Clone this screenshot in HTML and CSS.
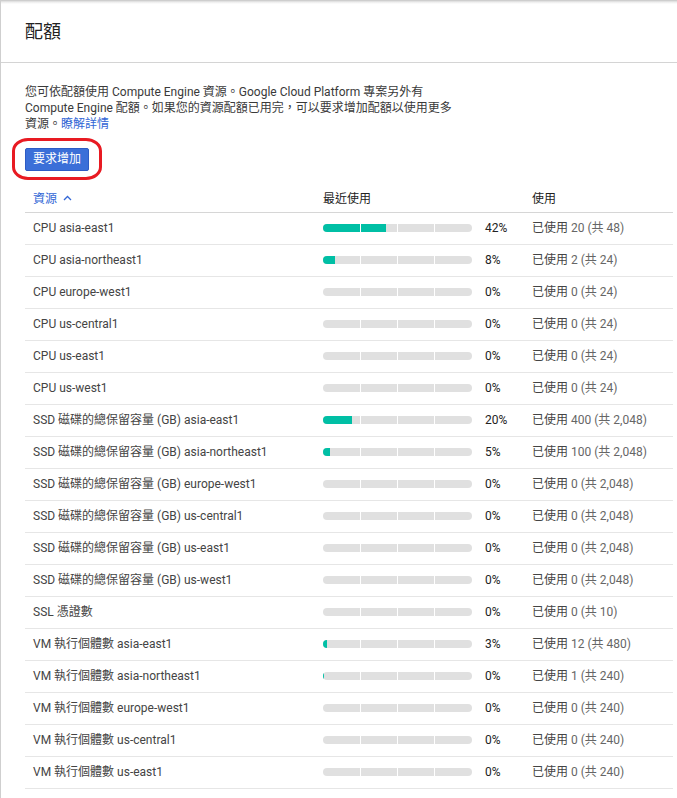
FILE: index.html
```html
<!DOCTYPE html>
<html lang="zh-Hant">
<head>
<meta charset="utf-8">
<title>配額</title>
<link rel="stylesheet" href="styles.css">
</head>
<body>
<div class="page">
  <header class="hdr"><h1 class="title">配額</h1></header>
  <main class="content">
    <p class="intro">您可依配額使用 Compute Engine 資源。Google Cloud Platform 專案另外有<br>Compute Engine 配額。如果您的資源配額已用完，可以要求增加配額以使用更多<br>資源。<a class="link" href="#">瞭解詳情</a></p>
    <div class="btn-wrap"><button class="btn">要求增加</button><span class="annot"></span></div>
    <table class="quota">
      <colgroup><col class="c1"><col class="c2"><col class="c3"><col class="c4"></colgroup>
      <thead>
        <tr>
          <th class="sort">資源 <svg class="caret" width="9" height="6" viewBox="0 0 9 6"><path d="M1 5 L4.5 1.5 L8 5" fill="none" stroke="#3367d6" stroke-width="1.3"/></svg></th>
          <th colspan="2">最近使用</th>
          <th>使用</th>
        </tr>
      </thead>
      <tbody>
        <tr><td>CPU asia-east1</td><td><div class="bar"><div class="fill" style="width:42%"></div></div></td><td class="pct">42%</td><td>已使用 <span class="num">20 (共 48)</span></td></tr>
        <tr><td>CPU asia-northeast1</td><td><div class="bar"><div class="fill" style="width:8%"></div></div></td><td class="pct">8%</td><td>已使用 <span class="num">2 (共 24)</span></td></tr>
        <tr><td>CPU europe-west1</td><td><div class="bar"></div></td><td class="pct">0%</td><td>已使用 <span class="num">0 (共 24)</span></td></tr>
        <tr><td>CPU us-central1</td><td><div class="bar"></div></td><td class="pct">0%</td><td>已使用 <span class="num">0 (共 24)</span></td></tr>
        <tr><td>CPU us-east1</td><td><div class="bar"></div></td><td class="pct">0%</td><td>已使用 <span class="num">0 (共 24)</span></td></tr>
        <tr><td>CPU us-west1</td><td><div class="bar"></div></td><td class="pct">0%</td><td>已使用 <span class="num">0 (共 24)</span></td></tr>
        <tr><td>SSD 磁碟的總保留容量 (GB) asia-east1</td><td><div class="bar"><div class="fill" style="width:19.5%"></div></div></td><td class="pct">20%</td><td>已使用 <span class="num">400 (共 2,048)</span></td></tr>
        <tr><td>SSD 磁碟的總保留容量 (GB) asia-northeast1</td><td><div class="bar"><div class="fill" style="width:5%"></div></div></td><td class="pct">5%</td><td>已使用 <span class="num">100 (共 2,048)</span></td></tr>
        <tr><td>SSD 磁碟的總保留容量 (GB) europe-west1</td><td><div class="bar"></div></td><td class="pct">0%</td><td>已使用 <span class="num">0 (共 2,048)</span></td></tr>
        <tr><td>SSD 磁碟的總保留容量 (GB) us-central1</td><td><div class="bar"></div></td><td class="pct">0%</td><td>已使用 <span class="num">0 (共 2,048)</span></td></tr>
        <tr><td>SSD 磁碟的總保留容量 (GB) us-east1</td><td><div class="bar"></div></td><td class="pct">0%</td><td>已使用 <span class="num">0 (共 2,048)</span></td></tr>
        <tr><td>SSD 磁碟的總保留容量 (GB) us-west1</td><td><div class="bar"></div></td><td class="pct">0%</td><td>已使用 <span class="num">0 (共 2,048)</span></td></tr>
        <tr><td>SSL 憑證數</td><td><div class="bar"></div></td><td class="pct">0%</td><td>已使用 <span class="num">0 (共 10)</span></td></tr>
        <tr><td>VM 執行個體數 asia-east1</td><td><div class="bar"><div class="fill" style="width:3%"></div></div></td><td class="pct">3%</td><td>已使用 <span class="num">12 (共 480)</span></td></tr>
        <tr><td>VM 執行個體數 asia-northeast1</td><td><div class="bar"><div class="fill" style="width:0.6%"></div></div></td><td class="pct">0%</td><td>已使用 <span class="num">1 (共 240)</span></td></tr>
        <tr><td>VM 執行個體數 europe-west1</td><td><div class="bar"></div></td><td class="pct">0%</td><td>已使用 <span class="num">0 (共 240)</span></td></tr>
        <tr><td>VM 執行個體數 us-central1</td><td><div class="bar"></div></td><td class="pct">0%</td><td>已使用 <span class="num">0 (共 240)</span></td></tr>
        <tr><td>VM 執行個體數 us-east1</td><td><div class="bar"></div></td><td class="pct">0%</td><td>已使用 <span class="num">0 (共 240)</span></td></tr>
      </tbody>
    </table>
  </main>
</div>
</body>
</html>
```

FILE: styles.css
```css
html, body {
  margin: 0;
  padding: 0;
  background: #fff;
}
body {
  font-family: Roboto, "Noto Sans CJK TC", sans-serif;
  font-size: 12px;
  color: #444;
}
.page {
  border-left: 1px solid #cfcfcf;
  min-height: 798px;
  box-sizing: border-box;
}
.hdr {
  height: 62px;
  border-bottom: 1px solid #d4d4d4;
  background: linear-gradient(#c4c4c4 0, #ececec 2px, #fff 4px);
  padding-left: 24px;
  display: flex;
  align-items: center;
}
.title {
  margin: 0;
  font-size: 18px;
  font-weight: 400;
  line-height: 24px;
  color: #222;
  padding-top: 2px;
}
.content {
  padding: 0 4px 0 24px;
}
.intro {
  margin: 21px 0 0;
  line-height: 16px;
  max-width: 480px;
  color: #3a3a3a;
}
.link {
  color: #3367d6;
  text-decoration: none;
}
.btn-wrap {
  position: relative;
  display: inline-block;
  margin-top: 16px;
  vertical-align: top;
}
.btn {
  display: block;
  height: 23px;
  padding: 0 7px;
  background: #3b6fd8;
  border: 1px solid #2d5bc4;
  border-radius: 2px;
  color: #fff;
  font-family: Roboto, "Noto Sans CJK TC", sans-serif;
  font-size: 12px;
  line-height: 21px;
}
.annot {
  position: absolute;
  left: -13px;
  right: -13px;
  top: -10px;
  bottom: -9px;
  border: 3px solid #e81a22;
  border-radius: 16px / 13px;
}
.quota {
  margin-top: 9px;
  width: 648px;
  table-layout: fixed;
  border-collapse: collapse;
}
.c1 { width: 290px; }
.c2 { width: 162px; }
.c3 { width: 47px; }
.c4 { width: auto; }
.quota th {
  height: 32px;
  padding: 7px 0 0 8px;
  box-sizing: border-box;
  text-align: left;
  font-weight: 400;
  line-height: 16px;
  color: #222;
  border-bottom: 1px solid #d6d6d6;
  vertical-align: middle;
}
.quota th.sort {
  color: #3367d6;
}
.caret {
  margin-left: 3px;
  vertical-align: 2px;
}
.quota td {
  height: 32px;
  padding: 0 0 0 8px;
  box-sizing: border-box;
  border-bottom: 1px solid #e6e6e6;
  white-space: nowrap;
  line-height: 16px;
  color: #444;
  vertical-align: middle;
}
.quota td.pct {
  color: #222;
}
.num {
  color: #666;
}
.bar {
  position: relative;
  width: 149px;
  height: 8px;
  border-radius: 4px;
  background: #e0e0e0;
  overflow: hidden;
}
.fill {
  height: 100%;
  background: #00bfa5;
}
.bar::after {
  content: "";
  position: absolute;
  inset: 0;
  background:
    linear-gradient(#fff, #fff) 37px 0 / 1px 100% no-repeat,
    linear-gradient(#fff, #fff) 74px 0 / 1px 100% no-repeat,
    linear-gradient(#fff, #fff) 111px 0 / 1px 100% no-repeat;
}
```
